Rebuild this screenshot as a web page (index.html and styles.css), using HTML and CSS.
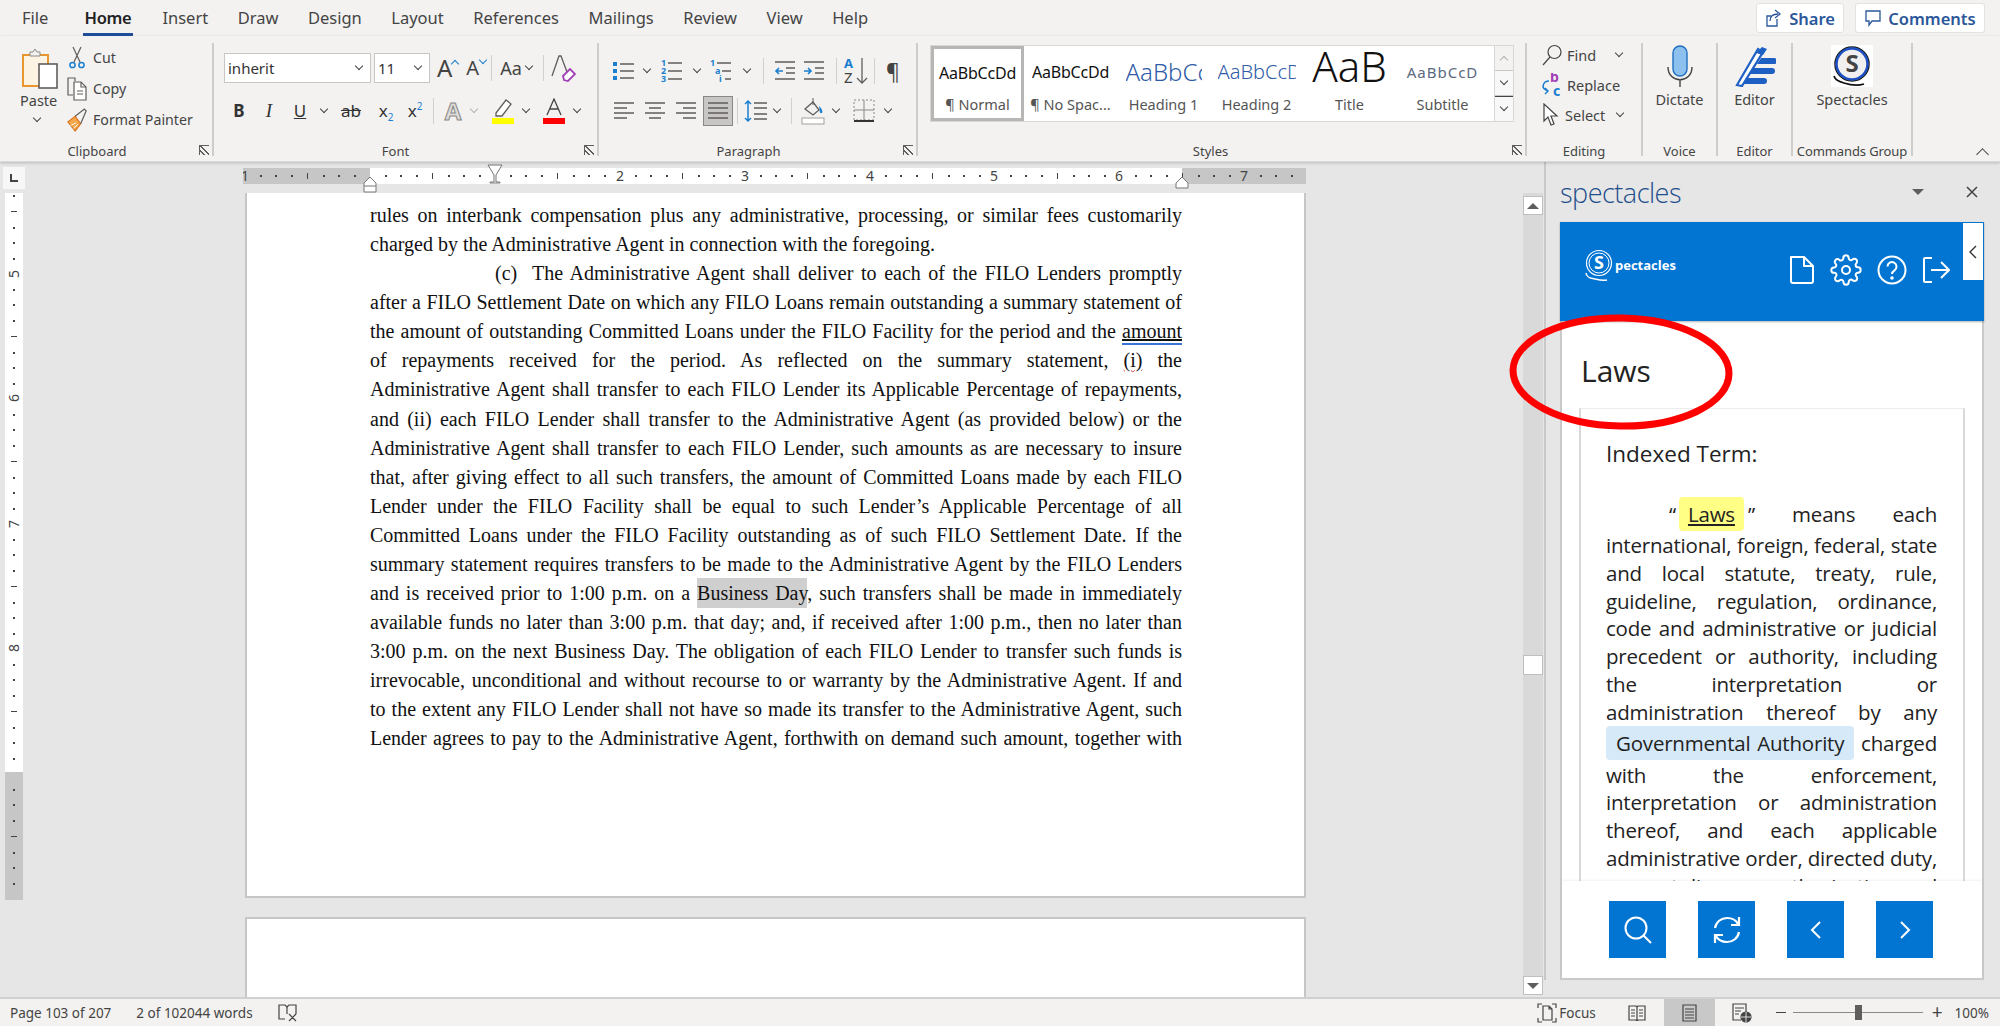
FILE: index.html
```html
<!DOCTYPE html>
<html lang="en">

<head>
    <meta charset="UTF-8">
    <title>Word - Spectacles</title>
    <link rel="stylesheet" href="styles.css">
</head>

<body>
    <div class="app">

        <!-- Tabs -->
        <header class="tabs">
            <nav class="tab-list">
                <span class="tab tab-file">File</span>
                <span class="tab tab-active">Home</span>
                <span class="tab">Insert</span>
                <span class="tab">Draw</span>
                <span class="tab">Design</span>
                <span class="tab">Layout</span>
                <span class="tab">References</span>
                <span class="tab">Mailings</span>
                <span class="tab">Review</span>
                <span class="tab">View</span>
                <span class="tab">Help</span>
            </nav>
            <div class="tab-actions">
                <button class="action-btn share-btn">
                    <svg width="18" height="20" viewBox="0 0 18 20" fill="none" stroke="#2b579a" stroke-width="1.3"><path d="M12 11v7H2V8h4"/><path d="M5 13c0-5 3-7 8-7"/><path d="M10 2l5 4-5 4"/></svg>
                    Share
                </button>
                <button class="action-btn comments-btn">
                    <svg width="18" height="18" viewBox="0 0 18 18" fill="none" stroke="#2b579a" stroke-width="1.3"><path d="M2 2h14v10H8l-3 4v-4H2z"/></svg>
                    Comments
                </button>
            </div>
        </header>

        <!-- Ribbon -->
        <section class="ribbon">

            <div class="group group-clipboard">
                <div class="group-body clipboard-body">
                    <div class="paste">
                        <svg width="38" height="42" viewBox="0 0 38 42" fill="none">
                            <rect x="2" y="7" width="25" height="31" fill="#fdf3e3" stroke="#e8962f" stroke-width="2"/>
                            <path d="M9 8V4h3l2-3 2 3h3v4z" fill="#f3f2f1" stroke="#8a8886"/>
                            <rect x="18" y="16" width="18" height="24" fill="#fff" stroke="#605e5c" stroke-width="1.6"/>
                        </svg>
                        <span class="paste-label">Paste</span>
                        <i class="chev"></i>
                    </div>
                    <ul class="clip-list">
                        <li>
                            <svg width="22" height="24" viewBox="0 0 22 24" fill="none"><path d="M7 1l7 15M15 1L8 16" stroke="#605e5c" stroke-width="1.2"/><circle cx="6.500" cy="19" r="2.600" stroke="#1b7fd0" stroke-width="1.500"/><circle cx="15.500" cy="19" r="2.600" stroke="#1b7fd0" stroke-width="1.500"/></svg>
                            Cut
                        </li>
                        <li>
                            <svg width="22" height="24" viewBox="0 0 22 24" fill="none" stroke="#605e5c" stroke-width="1.2"><path d="M9 4V1H2v17h5"/><path d="M8 5h7l5 5v13H8z" fill="#fff"/><path d="M15 5v5h5M11 14h6M11 17h6"/></svg>
                            Copy
                        </li>
                        <li>
                            <svg width="22" height="24" viewBox="0 0 24 26" fill="none"><path d="M2 15l8-6 6 8-6 8z" fill="#f5a84b" stroke="#d9731a" stroke-width="1.2"/><path d="M10 9l10-8 2 2-6 14" stroke="#605e5c" stroke-width="1.3"/><path d="M5 19l6-3M8 22l5-4" stroke="#fff"/></svg>
                            Format Painter
                        </li>
                    </ul>
                </div>
                <div class="group-label label-clip">Clipboard<i class="launcher"></i></div>
            </div>

            <div class="group group-font">
                <div class="group-body rows">
                    <div class="row font-top">
                        <div class="combo combo-name">inherit<i class="chev"></i></div>
                        <div class="combo combo-size">11<i class="chev"></i></div>
                        <span class="big-a grow">A</span>
                        <i class="chev chev-up chev-blue caret-grow"></i>
                        <span class="big-a shrink">A</span>
                        <i class="chev chev-blue caret-shrink"></i>
                        <i class="sep sep-case"></i>
                        <span class="case">Aa</span>
                        <i class="chev"></i>
                        <i class="sep sep-clear"></i>
                        <span class="clear-fmt">
                            <svg width="26" height="30" viewBox="0 0 26 30" fill="none"><path d="M2 23L9 3h2l6 16" stroke="#605e5c" stroke-width="1.3"/><path d="M13 23l7-7 5 5-7 7-4-1z" fill="#fff" stroke="#a23fb6" stroke-width="1.8"/></svg>
                        </span>
                    </div>
                    <div class="row font-bottom">
                        <b class="cell fmt">B</b>
                        <em class="cell fmt">I</em>
                        <span class="cell fmt underline">U</span>
                        <span class="cell"><i class="chev"></i></span>
                        <span class="cell fmt strike">ab</span>
                        <span class="cell fmt">x<sub>2</sub></span>
                        <span class="cell fmt">x<sup>2</sup></span>
                        <span class="cell"><i class="sep"></i></span>
                        <span class="cell effect">A</span>
                        <span class="cell"><i class="chev chev-pale"></i></span>
                        <span></span>
                        <span class="cell">
                            <svg width="24" height="26" viewBox="0 0 24 26" fill="none"><path d="M5 15L15 2l5 4-9 12H5z" fill="#fff" stroke="#605e5c" stroke-width="1.3"/><rect x="1" y="20" width="22" height="6" fill="#ffff00"/></svg>
                        </span>
                        <span class="cell"><i class="chev"></i></span>
                        <span class="cell">
                            <svg width="24" height="26" viewBox="0 0 24 26" fill="none"><path d="M5 17L12 1l7 16M8 11h8" stroke="#444" stroke-width="1.3"/><rect x="1" y="20" width="22" height="6" fill="#f00"/></svg>
                        </span>
                        <span class="cell"><i class="chev"></i></span>
                    </div>
                </div>
                <div class="group-label label-font">Font<i class="launcher"></i></div>
            </div>

            <div class="group group-para">
                <div class="group-body rows">
                    <div class="row para-top">
                        <span class="cell">
                            <svg width="22" height="24" viewBox="0 0 22 24"><g fill="#1b7fd0"><rect y="3" width="4" height="4"/><rect y="10" width="4" height="4"/><rect y="17" width="4" height="4"/></g><path d="M7 5h14M7 12h14M7 19h14" stroke="#605e5c" stroke-width="1.6"/></svg>
                        </span>
                        <span class="cell"><i class="chev"></i></span>
                        <span class="cell">
                            <svg width="22" height="26" viewBox="0 0 22 26"><g fill="#1b7fd0" class="list-num"><text x="0" y="8">1</text><text x="0" y="16">2</text><text x="0" y="24">3</text></g><path d="M7 5h14M7 13h14M7 21h14" stroke="#605e5c" stroke-width="1.6"/></svg>
                        </span>
                        <span class="cell"><i class="chev"></i></span>
                        <span class="cell">
                            <svg width="22" height="26" viewBox="0 0 22 26"><g fill="#1b7fd0" class="list-num"><text x="0" y="8">1</text><text x="5" y="16">a</text><text x="9" y="24">i</text></g><path d="M7 5h14M12 13h9M15 21h6" stroke="#605e5c" stroke-width="1.6"/></svg>
                        </span>
                        <span class="cell"><i class="chev"></i></span>
                        <span class="cell"><i class="sep"></i></span>
                        <span class="cell">
                            <svg width="22" height="24" viewBox="0 0 22 24" fill="none"><path d="M1 3h20M12 9h9M12 14h9M1 20h20" stroke="#605e5c" stroke-width="1.6"/><path d="M9 12H2M5 9l-3 3 3 3" stroke="#1b7fd0" stroke-width="1.6"/></svg>
                        </span>
                        <span class="cell">
                            <svg width="22" height="24" viewBox="0 0 22 24" fill="none"><path d="M1 3h20M12 9h9M12 14h9M1 20h20" stroke="#605e5c" stroke-width="1.6"/><path d="M1 12h7M5 9l3 3-3 3" stroke="#1b7fd0" stroke-width="1.6"/></svg>
                        </span>
                        <span class="cell"><i class="sep"></i></span>
                        <span class="cell">
                            <svg width="26" height="30" viewBox="0 0 26 30" fill="none"><text x="1" y="12" class="sort-a">A</text><text x="1" y="27" class="sort-z">Z</text><path d="M19 2v25M14 22l5 5 5-5" stroke="#605e5c" stroke-width="1.3"/></svg>
                        </span>
                        <span class="cell"><i class="sep"></i></span>
                        <span class="cell pilcrow">¶</span>
                    </div>
                    <div class="row para-bottom">
                        <span class="cell"><svg class="al" viewBox="0 0 22 22"><path d="M1 3h20M1 8h13M1 13h20M1 18h13"/></svg></span>
                        <span class="cell"><svg class="al" viewBox="0 0 22 22"><path d="M1 3h20M5 8h12M1 13h20M5 18h12"/></svg></span>
                        <span class="cell"><svg class="al" viewBox="0 0 22 22"><path d="M1 3h20M8 8h13M1 13h20M8 18h13"/></svg></span>
                        <span class="cell justify-on"><svg class="al" viewBox="0 0 22 22"><path d="M1 3h20M1 8h20M1 13h20M1 18h20"/></svg></span>
                        <span class="cell"><i class="sep"></i></span>
                        <span class="cell">
                            <svg width="24" height="24" viewBox="0 0 24 24" fill="none"><path d="M10 4h13M10 9h13M10 15h13M10 20h13" stroke="#605e5c" stroke-width="1.6"/><path d="M4 2v20M1 5l3-3 3 3M1 19l3 3 3-3" stroke="#1b7fd0" stroke-width="1.5"/></svg>
                        </span>
                        <span class="cell"><i class="chev"></i></span>
                        <span class="cell"><i class="sep"></i></span>
                        <span class="cell">
                            <svg width="24" height="28" viewBox="0 0 24 28" fill="none"><path d="M4 12L12 5l6 8-6 5z" stroke="#605e5c" stroke-width="1.3"/><path d="M12 1v7" stroke="#605e5c"/><path d="M18 9c3 3 4 5 3 7h-2z" fill="#1b7fd0"/><rect x="1" y="21" width="22" height="6" fill="#fff" stroke="#a19f9d"/></svg>
                        </span>
                        <span class="cell"><i class="chev"></i></span>
                        <span class="cell">
                            <svg width="22" height="24" viewBox="0 0 22 24" fill="none"><path d="M1 1h20v20H1z" stroke="#888" stroke-dasharray="2 2"/><path d="M11 1v20M1 11h20" stroke="#888"/><path d="M1 22h20" stroke="#333" stroke-width="2"/></svg>
                        </span>
                        <span class="cell"><i class="chev"></i></span>
                    </div>
                </div>
                <div class="group-label label-para">Paragraph<i class="launcher"></i></div>
            </div>

            <div class="group group-styles">
                <div class="group-body">
                    <div class="gallery">
                        <div class="style-item style-selected"><span class="pv pv-normal">AaBbCcDd</span><span class="style-name">¶ Normal</span></div>
                        <div class="style-item"><span class="pv pv-normal">AaBbCcDd</span><span class="style-name">¶ No Spac...</span></div>
                        <div class="style-item"><span class="pv pv-h1">AaBbCc</span><span class="style-name">Heading 1</span></div>
                        <div class="style-item"><span class="pv pv-h2">AaBbCcD</span><span class="style-name">Heading 2</span></div>
                        <div class="style-item"><span class="pv pv-title">AaB</span><span class="style-name">Title</span></div>
                        <div class="style-item"><span class="pv pv-sub">AaBbCcD</span><span class="style-name">Subtitle</span></div>
                        <div class="gallery-btns">
                            <span class="g-btn g-off"><i class="chev chev-up chev-pale"></i></span>
                            <span class="g-btn"><i class="chev"></i></span>
                            <span class="g-btn g-more"><i class="chev"></i></span>
                        </div>
                    </div>
                </div>
                <div class="group-label label-styles">Styles<i class="launcher"></i></div>
            </div>

            <div class="group group-edit">
                <ul class="group-body edit-list">
                    <li>
                        <svg width="22" height="22" viewBox="0 0 22 22" fill="none" stroke="#444" stroke-width="1.2"><circle cx="13.500" cy="8" r="6.500"/><path d="M9 13l-7 8"/></svg>
                        Find <i class="chev"></i>
                    </li>
                    <li>
                        <svg width="22" height="24" viewBox="0 0 22 24" fill="none"><text x="9" y="9" class="rep-b">b</text><text x="12" y="23" class="rep-c">c</text><path d="M8 8c-6 0-8 7-3 9l2 1M4 15l3 3-3 3" stroke="#1b7fd0" stroke-width="1.5"/></svg>
                        Replace
                    </li>
                    <li>
                        <svg width="20" height="24" viewBox="0 0 20 24" fill="#fff" stroke="#444" stroke-width="1.2"><path d="M3 1v17l4-4 3 8 3-1-3-8h6z"/></svg>
                        Select <i class="chev"></i>
                    </li>
                </ul>
                <div class="group-label">Editing</div>
            </div>

            <div class="group group-voice">
                <div class="group-body big-btn">
                    <svg width="30" height="42" viewBox="0 0 30 42" fill="none"><rect x="8" y="1" width="14" height="30" rx="7" fill="#8cc0ee" stroke="#1e6fc0" stroke-width="1.4"/><path d="M3 22c0 17 24 17 24 0M15 34v8" stroke="#444" stroke-width="1.4"/></svg>
                    <span>Dictate</span>
                </div>
                <div class="group-label">Voice</div>
            </div>

            <div class="group group-editor">
                <div class="group-body big-btn">
                    <svg width="42" height="42" viewBox="0 0 42 42" fill="none"><path d="M3 40L24 4l5 3L8 41z" fill="#fff" stroke="#1e5fc4" stroke-width="2.2"/><path d="M22 8l6-6 5 2-4 6" fill="#1e5fc4"/><path d="M27 13h13a2.500 2.500 0 0 1 0 6H23zM20 23h18a2.500 2.500 0 0 1 0 6H15zM12 33h18a2.500 2.500 0 0 1 0 6H9z" fill="#1e5fc4"/></svg>
                    <span>Editor</span>
                </div>
                <div class="group-label">Editor</div>
            </div>

            <div class="group group-cmd">
                <div class="group-body big-btn">
                    <svg class="spec-logo" width="42" height="42" viewBox="0 0 42 42" fill="none"><rect width="42" height="42" fill="#fff"/><circle cx="21" cy="19" r="17" fill="#f0f0f0" stroke="#1a1a1a" stroke-width="1.5"/><circle cx="21" cy="19" r="15.500" stroke="#1d4fc0" stroke-width="2.500"/><text x="21" y="27" class="spec-s">S</text><path d="M3 31c2 6 6 5 10 7 6 2 14 3 20 1" stroke="#111" stroke-width="1.8"/></svg>
                    <span>Spectacles</span>
                </div>
                <div class="group-label group-label-tight">Commands Group</div>
            </div>

            <i class="chev chev-up collapse-ribbon"></i>
        </section>

        <!-- Document area -->
        <main class="workspace">
            <div class="margin-col">
                <div class="tab-stop"><i></i></div>
                <svg class="vruler" width="18" height="707" viewBox="0 0 18 707">
                    <defs>
                        <pattern id="vticks" width="18" height="125" patternUnits="userSpaceOnUse" y="81">
                            <g fill="#444"><rect x="8" y="15" width="2" height="2"/><rect x="8" y="30" width="2" height="2"/><rect x="8" y="46" width="2" height="2"/><rect x="6" y="62" width="6" height="1"/><rect x="8" y="78" width="2" height="2"/><rect x="8" y="93" width="2" height="2"/><rect x="8" y="109" width="2" height="2"/></g>
                        </pattern>
                    </defs>
                    <rect width="18" height="579" fill="#fff"/>
                    <rect y="579" width="18" height="128" fill="#c6c6c6"/>
                    <rect width="18" height="707" fill="url(#vticks)"/>
                    <g class="ruler-num">
                        <text transform="translate(14 81) rotate(-90)">5</text>
                        <text transform="translate(14 205) rotate(-90)">6</text>
                        <text transform="translate(14 331) rotate(-90)">7</text>
                        <text transform="translate(14 455) rotate(-90)">8</text>
                    </g>
                </svg>
            </div>

            <div class="doc-col">
                <svg class="hruler" width="1063" height="31" viewBox="0 0 1063 31">
                    <defs>
                        <pattern id="hticks" width="125" height="31" patternUnits="userSpaceOnUse" x="2">
                            <g fill="#444"><rect x="15" y="13" width="2" height="2"/><rect x="30" y="13" width="2" height="2"/><rect x="46" y="13" width="2" height="2"/><rect x="62" y="11" width="1" height="6"/><rect x="78" y="13" width="2" height="2"/><rect x="93" y="13" width="2" height="2"/><rect x="109" y="13" width="2" height="2"/></g>
                        </pattern>
                    </defs>
                    <rect y="6" width="1063" height="16" fill="#c6c6c6"/>
                    <rect x="127" y="6" width="812" height="16" fill="#fff"/>
                    <rect y="6" width="1063" height="16" fill="url(#hticks)"/>
                    <g class="ruler-num">
                        <text x="2" y="19">1</text>
                        <text x="377" y="19">2</text>
                        <text x="502" y="19">3</text>
                        <text x="627" y="19">4</text>
                        <text x="751" y="19">5</text>
                        <text x="876" y="19">6</text>
                        <text x="1001" y="19">7</text>
                    </g>
                    <path d="M245 3h14l-6 10v7h4v1h-10v-1h4v-7z" fill="#fff" stroke="#777"/>
                    <path d="M127 15l6 6v9h-12v-9z M121 24h12" fill="#fff" stroke="#777"/>
                    <path d="M939 15l6 6v5h-12v-5z" fill="#fff" stroke="#777"/>
                </svg>

                <article class="page page-one">
                    <div class="ln">rules on interbank compensation plus any administrative, processing, or similar fees customarily</div>
                    <div class="ln ln-last">charged by the Administrative Agent in connection with the foregoing.</div>
                    <div class="ln ln-indent">(c)&nbsp; The Administrative Agent shall deliver to each of the FILO Lenders promptly</div>
                    <div class="ln">after a FILO Settlement Date on which any FILO Loans remain outstanding a summary statement of</div>
                    <div class="ln">the amount of outstanding Committed Loans under the FILO Facility for the period and the <span class="mark-blue">amount</span></div>
                    <div class="ln">of repayments received for the period. As reflected on the summary statement, <span class="mark-red">(i)</span> the</div>
                    <div class="ln">Administrative Agent shall transfer to each FILO Lender its Applicable Percentage of repayments,</div>
                    <div class="ln">and (ii) each FILO Lender shall transfer to the Administrative Agent (as provided below) or the</div>
                    <div class="ln">Administrative Agent shall transfer to each FILO Lender, such amounts as are necessary to insure</div>
                    <div class="ln">that, after giving effect to all such transfers, the amount of Committed Loans made by each FILO</div>
                    <div class="ln">Lender under the FILO Facility shall be equal to such Lender’s Applicable Percentage of all</div>
                    <div class="ln">Committed Loans under the FILO Facility outstanding as of such FILO Settlement Date. If the</div>
                    <div class="ln">summary statement requires transfers to be made to the Administrative Agent by the FILO Lenders</div>
                    <div class="ln">and is received prior to 1:00 p.m. on a <span class="mark-gray">Business Day</span>, such transfers shall be made in immediately</div>
                    <div class="ln">available funds no later than 3:00 p.m. that day; and, if received after 1:00 p.m., then no later than</div>
                    <div class="ln">3:00 p.m. on the next Business Day. The obligation of each FILO Lender to transfer such funds is</div>
                    <div class="ln">irrevocable, unconditional and without recourse to or warranty by the Administrative Agent. If and</div>
                    <div class="ln">to the extent any FILO Lender shall not have so made its transfer to the Administrative Agent, such</div>
                    <div class="ln">Lender agrees to pay to the Administrative Agent, forthwith on demand such amount, together with</div>
                </article>
                <article class="page page-two"></article>
            </div>

            <div class="vscroll">
                <span class="vs-btn"><i class="tri tri-up"></i></span>
                <span class="vs-thumb"></span>
                <span class="vs-btn"><i class="tri tri-down"></i></span>
            </div>

            <!-- Spectacles task pane -->
            <aside class="pane">
                <div class="pane-title">
                    <span>spectacles</span>
                    <i class="tri tri-down pane-menu"></i>
                    <svg width="12" height="12" viewBox="0 0 12 12" stroke="#444" stroke-width="1.5"><path d="M1 1l10 10M11 1L1 11"/></svg>
                </div>
                <div class="pane-card">
                    <div class="card-head">
                        <div class="brand">
                            <svg width="30" height="34" viewBox="0 0 30 34" fill="none" stroke="#fff"><circle cx="15" cy="14" r="12.500" stroke-width="1.200"/><circle cx="15" cy="14" r="10" stroke-width="1"/><text x="15" y="20" class="brand-s">S</text><path d="M2 24c1 6 6 5 9 6 4 1 8 2 12 1" stroke-width="1.500"/></svg>
                            <span>pectacles</span>
                        </div>
                        <div class="head-icons">
                            <svg width="26" height="30" viewBox="0 0 26 30" fill="none" stroke="#fff" stroke-width="2" stroke-linejoin="round"><path d="M2 2h13l9 9v15a2 2 0 0 1-2 2H4a2 2 0 0 1-2-2z"/><path d="M15 2v9h9"/></svg>
                            <svg width="32" height="32" viewBox="0 0 24 24" fill="none" stroke="#fff" stroke-width="1.500"><circle cx="12" cy="12" r="3"/><path d="M19.400 15a1.650 1.650 0 0 0 .33 1.820l.06.06a2 2 0 1 1-2.830 2.830l-.06-.06a1.650 1.650 0 0 0-2.820 1.170V21a2 2 0 1 1-4 0v-.09a1.650 1.650 0 0 0-2.830-1.150l-.06.06a2 2 0 1 1-2.830-2.830l.06-.06a1.650 1.650 0 0 0-1.170-2.820H3a2 2 0 1 1 0-4h.09a1.650 1.650 0 0 0 1.150-2.830l-.06-.06a2 2 0 1 1 2.830-2.830l.06.06a1.650 1.650 0 0 0 1.820.33H9a1.650 1.650 0 0 0 1-1.510V3a2 2 0 1 1 4 0v.09a1.650 1.650 0 0 0 2.830 1.150l.06-.06a2 2 0 1 1 2.830 2.830l-.06.06a1.650 1.650 0 0 0-.33 1.820V9a1.650 1.650 0 0 0 1.510 1H21a2 2 0 1 1 0 4h-.09a1.650 1.650 0 0 0-1.510 1z"/></svg>
                            <svg width="30" height="30" viewBox="0 0 30 30" fill="none" stroke="#fff" stroke-width="2"><circle cx="15" cy="15" r="13.500"/><path d="M10.500 11.500a4.500 4.500 0 1 1 7 3.800c-1.500 1-2.500 1.700-2.500 3.700"/><circle cx="15" cy="23" r=".8"/></svg>
                            <svg width="28" height="28" viewBox="0 0 28 28" fill="none" stroke="#fff" stroke-width="2"><path d="M10 2H3a1 1 0 0 0-1 1v22a1 1 0 0 0 1 1h7"/><path d="M9 14h18M19 6l8 8-8 8"/></svg>
                        </div>
                        <div class="collapse-tab"><svg width="8" height="14" viewBox="0 0 8 14" fill="none" stroke="#333" stroke-width="1.400"><path d="M7 1L1 7l6 6"/></svg></div>
                    </div>

                    <div class="card-scroll">
                        <h1 class="term-title">Laws</h1>
                        <div class="term-card">
                            <h2 class="term-heading">Indexed Term:</h2>
                            <div class="tl tl-first"><span class="term-ref">“<span class="hl-yellow">Laws</span>”</span> means each</div>
                            <div class="tl">international, foreign, federal, state</div>
                            <div class="tl">and local statute, treaty, rule,</div>
                            <div class="tl">guideline, regulation, ordinance,</div>
                            <div class="tl">code and administrative or judicial</div>
                            <div class="tl">precedent or authority, including</div>
                            <div class="tl">the interpretation or</div>
                            <div class="tl">administration thereof by any</div>
                            <div class="tl tl-gov"><span class="hl-blue">Governmental Authority</span> charged</div>
                            <div class="tl">with the enforcement,</div>
                            <div class="tl">interpretation or administration</div>
                            <div class="tl">thereof, and each applicable</div>
                            <div class="tl">administrative order, directed duty,</div>
                            <div class="tl">request, license, authorization and</div>
                        </div>
                    </div>

                    <div class="card-foot">
                        <button class="foot-btn"><svg width="30" height="30" viewBox="0 0 30 30" fill="none" stroke="#fff" stroke-width="2"><circle cx="13" cy="13" r="10.500"/><path d="M20.500 20.500L28 28"/></svg></button>
                        <button class="foot-btn"><svg width="32" height="30" viewBox="0 0 32 30" fill="none" stroke="#fff" stroke-width="2.200"><path d="M4 13C5 7 10 3 16 3c5 0 9 2 11 6"/><path d="M28 2v8h-8"/><path d="M28 17c-1 6-6 10-12 10-5 0-9-2-11-6"/><path d="M4 28v-8h8"/></svg></button>
                        <button class="foot-btn"><svg width="12" height="20" viewBox="0 0 12 20" fill="none" stroke="#fff" stroke-width="2"><path d="M10 2L2 10l8 8"/></svg></button>
                        <button class="foot-btn"><svg width="12" height="20" viewBox="0 0 12 20" fill="none" stroke="#fff" stroke-width="2"><path d="M2 2l8 8-8 8"/></svg></button>
                    </div>
                </div>
            </aside>
        </main>

        <!-- Status bar -->
        <footer class="status">
            <div class="status-left">
                <span>Page 103 of 207</span>
                <span>2 of 102044 words</span>
                <svg width="20" height="18" viewBox="0 0 20 18" fill="none" stroke="#444" stroke-width="1.200"><path d="M7 15H1V1h6l2 2 2-2h7v9"/><path d="M9 3v7M11 10l7 7M18 10l-7 7"/></svg>
            </div>
            <div class="status-right">
                <span class="focus">
                    <svg width="20" height="20" viewBox="0 0 20 20" fill="none" stroke="#444" stroke-width="1.200"><path d="M1 5V1h4M15 1h4v4M19 15v4h-4M5 19H1v-4"/><path d="M6 3h6l3 3v11H6zM12 3v3h3"/></svg>
                    Focus
                </span>
                <svg class="read-view" width="18" height="16" viewBox="0 0 18 16" fill="none" stroke="#444" stroke-width="1.200"><path d="M1 1h7l1 1 1-1h7v14h-7l-1 1-1-1H1zM9 2v13M3 5h4M3 8h4M3 11h4M11 5h4M11 8h4M11 11h4"/></svg>
                <span class="print-view">
                    <svg width="15" height="18" viewBox="0 0 15 18" fill="none" stroke="#444" stroke-width="1.200"><path d="M1 1h13v16H1zM3 5h9M3 8h9M3 11h9M3 14h9"/></svg>
                </span>
                <svg class="web-view" width="20" height="20" viewBox="0 0 20 20" fill="none" stroke="#444" stroke-width="1.200"><path d="M9 17H1V1h13v8M3 5h9M3 8h6M3 11h4"/><circle cx="14" cy="14" r="5" fill="#444"/><path d="M9 14h10M14 9v10" stroke="#fff" stroke-width=".8"/></svg>
                <i class="zoom-minus"></i>
                <div class="zoom-track"><i></i></div>
                <span class="zoom-plus">+</span>
                <span class="zoom-pct">100%</span>
            </div>
        </footer>

        <!-- Red circle drawn over the pane -->
        <svg class="red-ring" width="230" height="122" viewBox="0 0 230 122" fill="none"><ellipse cx="113" cy="61" rx="108" ry="54" stroke="#f00" stroke-width="7" transform="rotate(1 113 61)"/></svg>
    </div>
</body>

</html>
```

FILE: styles.css
```css
* {
    box-sizing: border-box;
}

body {
    margin: 0;
    padding: 0;
    font-family: "Noto Sans", Arial, sans-serif;
    color: #444;
}

ul {
    list-style: none;
    margin: 0;
    padding: 0;
}

i {
    display: inline-block;
}

.app {
    position: relative;
    width: 2000px;
    height: 1026px;
    display: flex;
    flex-direction: column;
    overflow: hidden;
    background-color: #f3f2f1;
}

/* Tabs */
.tabs {
    height: 36px;
    flex: none;
    display: flex;
    justify-content: space-between;
    padding: 3px 15px 0 22px;
}

.tab-list {
    display: flex;
    gap: 29.5px;
}

.tab {
    font-size: 16.5px;
    line-height: 30px;
    height: 33px;
    color: #444;
}

.tab-file {
    margin-right: 5px;
}

.tab-active {
    color: #222;
    font-weight: 600;
    border-bottom: 3px solid #1e4e9c;
    width: 50px;
    text-align: center;
    letter-spacing: -0.4px;
}

.tab-actions {
    display: flex;
    gap: 11px;
}

.action-btn {
    height: 30px;
    display: flex;
    align-items: center;
    justify-content: center;
    gap: 6px;
    background-color: #fff;
    border: 1px solid #e3e2e0;
    border-radius: 3px;
    color: #2b579a;
    font-family: inherit;
    font-size: 16.5px;
    font-weight: 600;
    padding: 0;
}

.share-btn {
    width: 88px;
}

.comments-btn {
    width: 130px;
}

/* Ribbon */
.ribbon {
    position: relative;
    z-index: 2;
    height: 126px;
    flex: none;
    display: flex;
    background-color: #f3f2f1;
    border-bottom: 1px solid #dcdad8;
    box-shadow: 0 1px 3px rgba(0, 0, 0, 0.2);
}

.group {
    display: flex;
    flex-direction: column;
    margin: 7px 0 5px;
    border-right: 2px solid #cfcdcb;
}

.group-body {
    flex: 1;
    min-height: 0;
}

.group-label {
    position: relative;
    flex: none;
    height: 24px;
    padding-top: 9px;
    line-height: 20px;
    text-align: center;
    font-size: 13px;
    color: #444;
}

.group-label-tight {
    white-space: nowrap;
    letter-spacing: -0.1px;
}

.label-clip {
    padding-right: 18px;
}

.label-font {
    padding-right: 20px;
}

.label-para {
    padding-right: 18px;
}

.label-styles {
    padding-right: 22px;
}

.launcher {
    position: absolute;
    right: 3px;
    top: 13px;
    width: 10px;
    height: 10px;
    border-left: 1px solid #605e5c;
    border-top: 1px solid #605e5c;
    background: linear-gradient(45deg, transparent 20%, #605e5c 20%, #605e5c 30%, transparent 30%, transparent 48%, #605e5c 48%, #605e5c 56%, transparent 56%);
}

.group-clipboard {
    width: 214px;
}

.group-font {
    width: 385px;
}

.group-para {
    width: 319px;
}

.group-styles {
    width: 609px;
}

.group-edit {
    width: 116px;
}

.group-voice,
.group-editor {
    width: 75px;
}

.group-cmd {
    width: 120px;
}

.chev {
    width: 6px;
    height: 6px;
    border-right: 1.5px solid #444;
    border-bottom: 1.5px solid #444;
    transform: translateY(-2px) rotate(45deg);
}

.chev-up {
    transform: translateY(2px) rotate(225deg);
}

.chev-pale {
    border-color: #b5b3b1;
}

.chev-blue {
    border-color: #1b7fd0;
}

.sep {
    width: 1px;
    height: 26px;
    background-color: #d2d0ce;
}

.collapse-ribbon {
    position: absolute;
    right: 13px;
    bottom: 4px;
    width: 9px;
    height: 9px;
}

/* Clipboard */
.clipboard-body {
    display: flex;
}

.paste {
    width: 66px;
    padding: 5px 0 0 21px;
    display: flex;
    flex-direction: column;
    align-items: flex-start;
}

.paste-label {
    font-size: 14.5px;
    line-height: 18px;
    margin: 1px 0 8px -1px;
}

.paste .chev {
    margin-left: 13px;
}

.clip-list {
    margin-top: -1px;
}

.clip-list li {
    height: 31px;
    display: flex;
    align-items: center;
    gap: 5px;
    font-size: 14.2px;
    white-space: nowrap;
}

.clip-list svg {
    flex: none;
}

/* Font and paragraph rows */
.rows {
    display: flex;
    flex-direction: column;
}

.row {
    display: flex;
    align-items: center;
}

.cell {
    display: flex;
    align-items: center;
    justify-content: center;
}

.font-top {
    height: 30px;
    margin: 10px 0 0 10px;
}

.combo {
    height: 30px;
    display: flex;
    align-items: center;
    justify-content: space-between;
    padding: 0 8px 0 3px;
    background-color: #fff;
    border: 1px solid #c8c6c4;
    font-size: 15px;
    color: #333;
}

.combo-name {
    width: 147px;
    margin-right: 3px;
}

.combo-size {
    width: 56px;
}

.big-a {
    font-size: 24px;
    color: #444;
    line-height: 30px;
    flex: none;
}

.grow {
    margin-left: 7px;
}

.caret-grow {
    margin: 0 8px 12px 0;
}

.shrink {
    font-size: 20px;
}

.caret-shrink {
    margin: 0 0 12px 1px;
}

.sep-case {
    margin-left: 5px;
}

.case {
    font-size: 18px;
    margin: 0 4px 0 8px;
}

.sep-clear {
    margin-left: 11px;
}

.clear-fmt {
    margin-left: 6px;
    display: flex;
}

.font-bottom {
    margin: 11px 0 0 10px;
    height: 30px;
    display: grid;
    grid-template-columns: 30px 30px 32px 16px 38px 32px 26px 10px 30px 12px 8px 30px 16px 40px 6px;
}

.fmt {
    font-size: 17px;
    color: #333;
    font-style: normal;
    font-family: "Noto Sans", sans-serif;
}

em.fmt {
    font-style: italic;
    font-family: "Liberation Serif", serif;
    font-size: 19px;
}

.fmt sub,
.fmt sup {
    font-size: 10px;
    color: #1b7fd0;
    line-height: 1;
}

.fmt sub {
    margin-top: 12px;
}

.fmt sup {
    margin-top: -10px;
}

.underline {
    text-decoration: underline;
}

.strike {
    text-decoration: line-through;
}

.effect {
    font-size: 24px;
    font-weight: 700;
    color: #dedcda;
    -webkit-text-stroke: 1px #8a8886;
}

.list-num {
    font-size: 9px;
    font-weight: 700;
}

.para-top {
    margin: 13px 0 0 7px;
    height: 30px;
    display: grid;
    grid-template-columns: 36px 10px 40px 10px 38px 13px 20px 24px 34px 10px 30px 6px 32px;
}

.para-bottom {
    margin: 10px 0 0 7px;
    height: 30px;
    display: grid;
    grid-template-columns: 36px 26px 35px 30px 8px 30px 12px 17px 26px 20px 36px 12px;
}

.al {
    width: 22px;
    height: 22px;
    fill: none;
    stroke: #605e5c;
    stroke-width: 1.6;
}

.justify-on {
    height: 30px;
    background-color: #c8c6c4;
    border: 1px solid #8a8886;
}

.sort-a {
    font-size: 13px;
    font-weight: 700;
    fill: #1b7fd0;
}

.sort-z {
    font-size: 15px;
    fill: #444;
}

.pilcrow {
    font-size: 21px;
    color: #444;
    line-height: 1;
}

/* Styles gallery */
.gallery {
    display: flex;
    height: 77px;
    margin: 2px 0 0 12px;
    background-color: #fff;
    border: 1px solid #d9d7d5;
    width: 584px;
}

.style-item {
    width: 93px;
    flex: none;
    display: flex;
    flex-direction: column;
    align-items: center;
    overflow: hidden;
    white-space: nowrap;
    padding: 0 4px;
}

.style-selected {
    border: 3px solid #b8b6b4;
    box-shadow: inset 0 0 0 1px #fff;
}

.pv {
    height: 48px;
    line-height: 52px;
    color: #111;
    display: block;
    flex: none;
}

.style-selected .pv {
    height: 45px;
    line-height: 49px;
}

.pv-normal {
    font-size: 16px;
    letter-spacing: -0.2px;
}

.pv-h1 {
    font-size: 24px;
    line-height: 52px;
    width: 76px;
    overflow: hidden;
    color: #2f5ca8;
    font-weight: 300;
}

.pv-h2 {
    font-size: 20px;
    width: 78px;
    overflow: hidden;
    color: #2f5ca8;
    font-weight: 300;
}

.pv-title {
    font-size: 42px;
    line-height: 40px;
    color: #111;
    font-weight: 300;
}

.pv-sub {
    font-size: 15px;
    color: #5a6a80;
    letter-spacing: 1px;
}

.style-name {
    font-size: 14.5px;
    line-height: 20px;
    color: #555;
}

.gallery-btns {
    margin-left: auto;
    width: 19px;
    flex: none;
    display: flex;
    flex-direction: column;
    border-left: 1px solid #d9d7d5;
}

.g-btn {
    flex: 1;
    display: flex;
    align-items: center;
    justify-content: center;
    background-color: #f8f8f8;
    border-bottom: 1px solid #c8c6c4;
}

.g-off {
    background-color: #f3f2f1;
}

.g-more {
    border-top: 1px solid #444;
    border-bottom: 0;
}

/* Editing */
.edit-list {
    padding: 0 0 0 14px;
    margin-top: -3px;
}

.edit-list li {
    height: 30px;
    display: flex;
    align-items: center;
    gap: 4px;
    font-size: 14.5px;
    white-space: nowrap;
}

.edit-list .chev {
    margin-left: 8px;
}

.edit-list li:first-child .chev {
    margin-left: 16px;
}

.rep-b {
    font-size: 14px;
    font-weight: 700;
    fill: #a23fb6;
}

.rep-c {
    font-size: 14px;
    font-weight: 700;
    fill: #1b7fd0;
}

/* Big buttons */
.big-btn {
    display: flex;
    flex-direction: column;
    align-items: center;
    font-size: 14.5px;
    padding-top: 2px;
}

.big-btn span {
    margin-top: 2px;
}

.spec-s {
    font-size: 24px;
    font-weight: 700;
    fill: #444;
    text-anchor: middle;
}

/* Workspace */
.workspace {
    flex: 1;
    min-height: 0;
    display: flex;
    background-color: #e6e6e6;
}

.margin-col {
    width: 243px;
    flex: none;
    padding-left: 5px;
}

.tab-stop {
    width: 22px;
    height: 22px;
    margin: 5px 0 4px -2px;
    background-color: #f7f7f7;
    display: flex;
    align-items: center;
    justify-content: center;
}

.tab-stop i {
    width: 8px;
    height: 8px;
    border-left: 2px solid #444;
    border-bottom: 2px solid #444;
}

.vruler {
    display: block;
}

.ruler-num {
    font-size: 14px;
    fill: #444;
    text-anchor: middle;
}

.doc-col {
    width: 1063px;
    flex: none;
    overflow: hidden;
}

.hruler {
    display: block;
    overflow: visible;
}

.page {
    background-color: #fff;
    margin-left: 2px;
    border-left: 2px solid #c6c6c6;
    border-right: 2px solid #c6c6c6;
}

.page-one {
    height: 705px;
    padding: 8px 0 0 123px;
    border-bottom: 2px solid #c6c6c6;
    font-family: "Liberation Serif", serif;
    font-size: 20px;
    color: #111;
}

.page-two {
    height: 100px;
    margin-top: 19px;
    border-top: 2px solid #c6c6c6;
}

.ln {
    width: 812px;
    height: 29.08px;
    line-height: 29px;
    text-align: justify;
    text-align-last: justify;
    white-space: nowrap;
}

.ln-last {
    text-align-last: left;
}

.ln-indent {
    width: 687px;
    margin-left: 125px;
}

.mark-blue {
    text-decoration: underline;
    border-bottom: 2px solid #3b74d8;
    padding-bottom: 1px;
}

.mark-red {
    text-decoration: underline wavy #d04040 1px;
}

.mark-gray {
    background-color: #cfcfcf;
    padding: 4px 0;
}

.vscroll {
    width: 20px;
    flex: none;
    margin: 31px 0 2px 217px;
    background-color: #d9d9d9;
    display: flex;
    flex-direction: column;
    justify-content: space-between;
    align-items: stretch;
}

.vs-btn {
    height: 19px;
    margin-top: 3px;
    background-color: #fff;
    border: 1px solid #bfbfbf;
    display: flex;
    align-items: center;
    justify-content: center;
}

.vs-thumb {
    height: 20px;
    background-color: #fff;
    border: 1px solid #bfbfbf;
    margin-top: 142px;
}

.tri {
    width: 0;
    height: 0;
    border-left: 6px solid transparent;
    border-right: 6px solid transparent;
}

.tri-up {
    border-bottom: 6px solid #605e5c;
}

.tri-down {
    border-top: 6px solid #605e5c;
}

/* Task pane */
.pane {
    width: 457px;
    flex: none;
    margin-left: 1px;
    padding-left: 14px;
    border-left: 2px solid #c8c8c8;
    display: flex;
    flex-direction: column;
    height: 818px;
}

.pane-title {
    height: 60px;
    flex: none;
    display: flex;
    align-items: center;
    padding-right: 23px;
    color: #1f4e8c;
    font-size: 27px;
    font-weight: 300;
}

.pane-title span {
    flex: 1;
    font-family: "Open Sans", sans-serif;
    letter-spacing: -0.5px;
    font-weight: 300;
}

.pane-menu {
    margin-right: 42px;
}

.pane-card {
    width: 424px;
    height: 758px;
    flex: none;
    display: flex;
    flex-direction: column;
    background-color: #fff;
    border: 2px solid #c9c9c9;
    border-top: 0;
    font-family: "Open Sans", sans-serif;
    color: #222;
}

.card-head {
    position: relative;
    height: 99px;
    flex: none;
    display: flex;
    align-items: flex-start;
    padding: 26px 0 0 24px;
    background-color: #0275d2;
    margin: 0 -2px 0 -2px;
    box-shadow: 0 1px 2px rgba(0, 0, 0, 0.3);
}

.brand {
    display: flex;
    align-items: center;
    color: #fff;
    font-weight: 700;
    font-size: 13px;
    gap: 1px;
    height: 36px;
}

.brand span {
    margin-bottom: 3px;
}

.brand-s {
    font-size: 18px;
    font-weight: 700;
    fill: #fff;
    stroke: none;
    text-anchor: middle;
}

.head-icons {
    position: absolute;
    top: 32px;
    left: 229px;
    display: flex;
    align-items: center;
    gap: 15px;
}

.collapse-tab {
    position: absolute;
    top: 1px;
    right: 1px;
    width: 20px;
    height: 57px;
    background-color: #fff;
    display: flex;
    align-items: center;
    justify-content: center;
}

.card-scroll {
    flex: 1;
    min-height: 0;
    overflow: hidden;
    padding-left: 17px;
}

.term-title {
    margin: 0;
    height: 87px;
    padding: 30px 0 0 2px;
    font-size: 30px;
    line-height: 40px;
    font-weight: 400;
    color: #222;
}

.term-card {
    width: 386px;
    padding: 0 26px 0 25px;
    border: 2px solid #d9d9d9;
    border-top: 1px solid #ececec;
    border-bottom: 0;
    font-size: 20.5px;
    letter-spacing: -0.2px;
}

.term-heading {
    margin: 0;
    padding-top: 27px;
    height: 91px;
    font-size: 22.5px;
    line-height: 36px;
    font-weight: 400;
    letter-spacing: 0;
}

.tl {
    height: 27.8px;
    line-height: 28px;
    white-space: nowrap;
    text-align: justify;
    text-align-last: justify;
}

.tl-first {
    height: 31px;
    padding-left: 63px;
}

.tl-gov {
    height: 30px;
    margin: 2px 0 3px;
    line-height: 30px;
}

.term-ref {
    white-space: nowrap;
}

.hl-yellow {
    background-color: #ffff85;
    border-radius: 4px;
    padding: 3px 9px;
    margin: 0 4px 0 3px;
    text-decoration: underline;
}

.hl-blue {
    background-color: #d6e9f8;
    border-radius: 4px;
    padding: 3px 10px;
}

.card-foot {
    position: relative;
    height: 97px;
    flex: none;
    display: flex;
    gap: 32px;
    padding: 20px 0 0 47px;
    background-color: #fff;
    box-shadow: 0 -1px 2px rgba(0, 0, 0, 0.06);
}

.foot-btn {
    width: 57px;
    height: 57px;
    padding: 0;
    border: 0;
    background-color: #0275d2;
    display: flex;
    align-items: center;
    justify-content: center;
}

/* Status bar */
.status {
    height: 29px;
    flex: none;
    display: flex;
    justify-content: space-between;
    align-items: center;
    background-color: #f3f2f1;
    border-top: 2px solid #d2d0ce;
    font-size: 13.5px;
    color: #444;
}

.status-left {
    display: flex;
    align-items: center;
    padding-left: 10px;
    gap: 25px;
}

.status-right {
    display: flex;
    align-items: center;
    height: 100%;
    padding-right: 11px;
}

.focus {
    display: flex;
    align-items: center;
    gap: 2px;
}

.read-view {
    margin-left: 32px;
}

.print-view {
    width: 51px;
    height: 100%;
    margin-left: 18px;
    background-color: #c8c8c8;
    display: flex;
    align-items: center;
    justify-content: center;
}

.web-view {
    margin-left: 17px;
}

.zoom-minus {
    width: 10px;
    height: 1.5px;
    background-color: #444;
    margin-left: 24px;
}

.zoom-track {
    position: relative;
    width: 130px;
    height: 1px;
    margin-left: 7px;
    background-color: #8a8886;
}

.zoom-track i {
    position: absolute;
    left: 62px;
    top: -7px;
    width: 7px;
    height: 15px;
    background-color: #605e5c;
}

.zoom-plus {
    font-size: 19px;
    margin-left: 9px;
    line-height: 1;
}

.zoom-pct {
    margin-left: 12px;
}

/* Annotation */
.red-ring {
    position: absolute;
    left: 1508px;
    top: 311px;
    z-index: 5;
}
```
